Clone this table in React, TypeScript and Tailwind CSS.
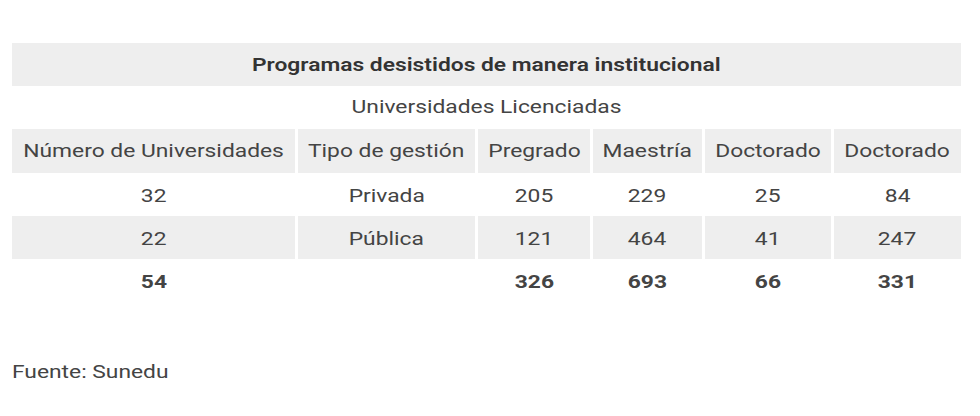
import React from "react";

const rows = [
  ["32", "Privada", "205", "229", "25", "84"],
  ["22", "Pública", "121", "464", "41", "247"],
];

const widths = ["w-[283px]", "w-[177px]", "w-[112px]", "w-[109px]", "w-[126px]", "w-[127px]"];

function T({ children }: { children: React.ReactNode }) {
  return <span className="inline-block scale-x-[1.2] whitespace-nowrap">{children}</span>;
}

export default function App() {
  return (
    <div className="bg-white w-[980px] h-[416px] text-[#444] pl-[9px] pt-[43px]" style={{ fontFamily: "Roboto, 'Noto Sans', sans-serif" }}>
      <table className="border-separate border-spacing-x-[3px] border-spacing-y-0 text-[19px] text-center">
        <thead>
          <tr>
            <th colSpan={6} className="bg-[#eeeeee] h-[43px] pt-[2px] font-semibold text-[#333]">
              <T>Programas desistidos de manera institucional</T>
            </th>
          </tr>
          <tr>
            <td colSpan={6} className="h-[43px] font-normal"><T>Universidades Licenciadas</T></td>
          </tr>
          <tr>
            {["Número de Universidades", "Tipo de gestión", "Pregrado", "Maestría", "Doctorado", "Doctorado"].map((h, i) => (
              <td key={i} className={`bg-[#eeeeee] h-[44px] p-0 ${widths[i]}`}><T>{h}</T></td>
            ))}
          </tr>
        </thead>
        <tbody>
          {rows.map((r, ri) => (
            <tr key={ri}>
              {r.map((c, i) => (
                <td key={i} className={`h-[43px] p-0 pt-[3px] ${ri === 1 ? "bg-[#eeeeee]" : ""}`}><T>{c}</T></td>
              ))}
            </tr>
          ))}
          <tr className="font-bold">
            {["54", "", "326", "693", "66", "331"].map((c, i) => (
              <td key={i} className="h-[43px] p-0 pt-[3px]"><T>{c}</T></td>
            ))}
          </tr>
        </tbody>
      </table>
      <p className="mt-[56px] ml-[3px] text-[19px]">
        <span className="inline-block scale-x-[1.2] origin-left">Fuente: Sunedu</span>
      </p>
    </div>
  );
}
